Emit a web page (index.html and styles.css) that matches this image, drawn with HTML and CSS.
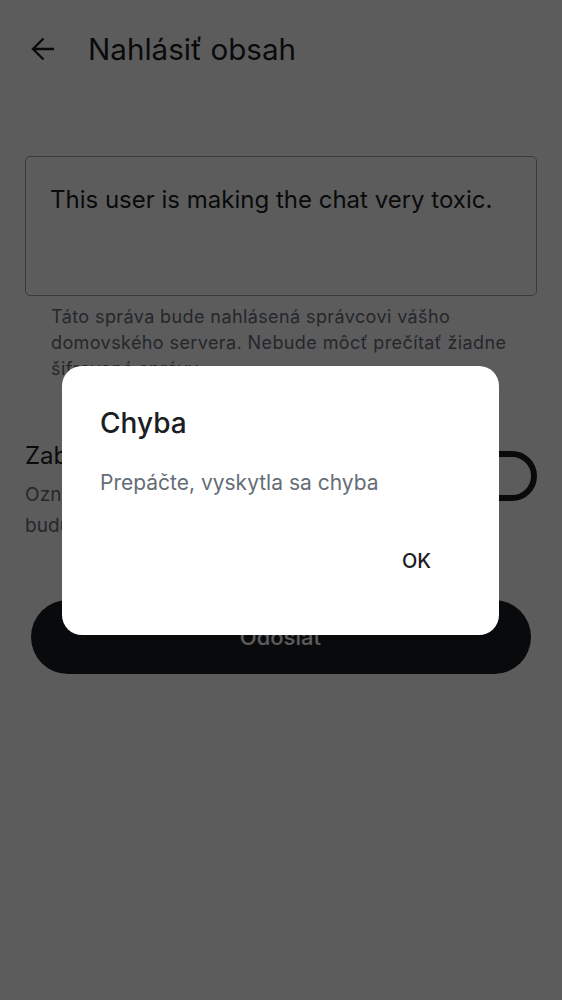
FILE: index.html
```html
<!DOCTYPE html>
<html lang="sk">
<head>
<meta charset="utf-8">
<title>Nahlásiť obsah</title>
<link rel="stylesheet" href="styles.css">
</head>
<body>
<div class="page">
  <header class="topbar">
    <svg class="back" width="24" height="24" viewBox="0 0 24 24" aria-hidden="true">
      <path d="M23 12H2.2M12.5 1.5 2 12l10.5 10.5" fill="none" stroke="#1b1d22" stroke-width="2.4" stroke-linejoin="miter"/>
    </svg>
    <h1 class="title">Nahlásiť obsah</h1>
  </header>
  <main class="content">
    <div class="field">This user is making the chat very toxic.</div>
    <p class="helper">Táto správa bude nahlásená správcovi vášho domovského servera. Nebude môcť prečítať žiadne šifrované správy.</p>
    <div class="block-row">
      <div class="block-text">
        <div class="block-title">Zablokovať používateľa</div>
        <div class="block-sub">Označte, ak chcete skryť všetky aktuálne a budúce správy od tohto používateľa</div>
      </div>
      <div class="switch"></div>
    </div>
    <button class="send">Odoslať</button>
  </main>
</div>
<div class="scrim">
  <div class="dialog">
    <h2 class="dlg-title">Chyba</h2>
    <p class="dlg-body">Prepáčte, vyskytla sa chyba</p>
    <div class="dlg-actions"><button class="dlg-ok">OK</button></div>
  </div>
</div>
</body>
</html>
```

FILE: styles.css
```css
* { box-sizing: border-box; }
html, body { margin: 0; padding: 0; }
body {
  width: 562px;
  height: 1000px;
  background: #ffffff;
  font-family: Inter, Roboto, "Noto Sans", sans-serif;
  color: #1b1d22;
  overflow: hidden;
}
.page { width: 562px; }
.topbar {
  height: 98px;
  display: flex;
  align-items: center;
  padding-left: 31px;
  gap: 33px;
}
.back { flex: none; display: block; }
.title {
  margin: 0;
  font-size: 29.6px;
  font-weight: 400;
  line-height: 36px;
  color: #1b1d22;
}
.content {
  padding: 58px 25px 0 25px;
}
.field {
  height: 140px;
  border: 1px solid #9ba1ab;
  border-radius: 5px;
  padding: 27px 24px 0 24px;
  font-size: 24px;
  line-height: 32px;
  color: #1b1d22;
}
.helper {
  margin: 8px 0 0 0;
  padding: 0 20px 0 26px;
  font-size: 18px;
  line-height: 26px;
  letter-spacing: 0.4px;
  color: #656d77;
}
.block-row {
  margin-top: 58px;
  display: flex;
  align-items: flex-start;
  gap: 20px;
}
.block-text { flex: 1; }
.block-title {
  font-size: 24px;
  line-height: 32px;
  color: #1b1d22;
}
.block-sub {
  margin-top: 7px;
  font-size: 19px;
  line-height: 31px;
  letter-spacing: 0.1px;
  color: #656d77;
}
.switch {
  flex: none;
  width: 76px;
  height: 50px;
  margin-top: 11px;
  border: 6px solid #1b1d22;
  border-radius: 25px;
}
.send {
  display: block;
  margin: 59px 0 0 6px;
  width: 500px;
  height: 74px;
  border: 0;
  border-radius: 37px;
  background: #1b1d22;
  color: #ffffff;
  font-family: Inter, Roboto, "Noto Sans", sans-serif;
  font-size: 22px;
  font-weight: 500;
}
.scrim {
  position: fixed;
  inset: 0;
  background: rgba(0, 0, 0, 0.64);
  display: flex;
  align-items: center;
  justify-content: center;
}
.dialog {
  width: 437px;
  height: 269px;
  background: #ffffff;
  border-radius: 20px;
  padding: 39px 38px 0 38px;
  margin-left: -1px;
}
.dlg-title {
  margin: 0;
  font-size: 28px;
  font-weight: 500;
  line-height: 36px;
  color: #1b1d22;
}
.dlg-body {
  margin: 28px 0 0 0;
  font-size: 21px;
  line-height: 28px;
  color: #656d77;
}
.dlg-actions {
  margin-top: 50px;
  display: flex;
  justify-content: flex-end;
  padding-right: 30px;
}
.dlg-ok {
  border: 0;
  background: none;
  padding: 0;
  font-family: Inter, Roboto, "Noto Sans", sans-serif;
  font-size: 20px;
  font-weight: 500;
  line-height: 28px;
  color: #1b1d22;
}
```
